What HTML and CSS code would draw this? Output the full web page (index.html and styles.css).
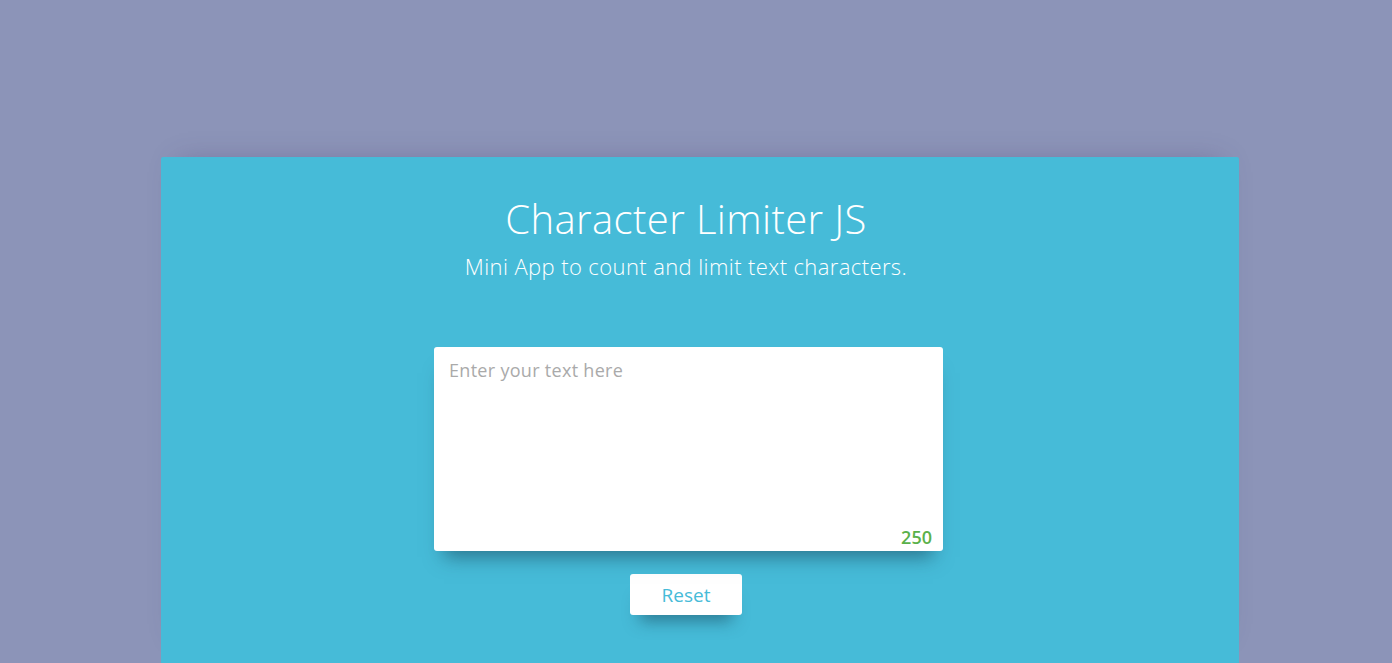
FILE: index.html
```html
<!DOCTYPE html>
<html lang="en">
<head>
<meta charset="utf-8">
<title>Character Limiter JS</title>
<link rel="stylesheet" href="styles.css">
</head>
<body>
<main class="card">
  <h1 class="title">Character Limiter JS</h1>
  <p class="subtitle">Mini App to count and limit text characters.</p>
  <div class="editor">
    <textarea class="text-input" placeholder="Enter your text here"></textarea>
    <span class="counter">250</span>
  </div>
  <button class="reset" type="button">Reset</button>
</main>
</body>
</html>
```
FILE: styles.css
```css
html, body {
  margin: 0;
  padding: 0;
  height: 100%;
  overflow: hidden;
}
body {
  background: #8c94b8;
  font-family: "Open Sans", "Lato", sans-serif;
  color: #fff;
}
.card {
  margin: 157px 0 0 161px;
  width: 1078px;
  height: 506px;
  box-sizing: border-box;
  padding: 35px 28px 0 0;
  background: #46bbd8;
  border-radius: 2px 2px 0 0;
  box-shadow: 0 -12px 26px -18px rgba(70, 60, 110, 0.4);
  display: flex;
  flex-direction: column;
  align-items: center;
}
.title {
  margin: 0;
  font-weight: 300;
  font-size: 40px;
  line-height: 54px;
  letter-spacing: 0.4px;
}
.subtitle {
  margin: 0;
  font-weight: 300;
  font-size: 22px;
  line-height: 40px;
  letter-spacing: 0.4px;
}
.editor {
  position: relative;
  margin: 61px 0 0 5px;
  width: 509px;
  height: 204px;
  background: #fff;
  border-radius: 3px;
  box-shadow: 0 16px 18px -10px rgba(20, 60, 80, 0.55);
}
.text-input {
  display: block;
  width: 100%;
  height: 100%;
  box-sizing: border-box;
  border: 0;
  outline: none;
  resize: none;
  background: transparent;
  padding: 11px 15px;
  font-family: inherit;
  font-size: 18px;
  letter-spacing: 0.3px;
  color: #555;
}
.text-input::placeholder {
  color: #aaa;
}
.counter {
  position: absolute;
  right: 11px;
  bottom: 2px;
  font-size: 18px;
  font-weight: 600;
  color: #5ab14a;
}
.reset {
  margin-top: 23px;
  width: 112px;
  height: 41px;
  border: 0;
  border-radius: 3px;
  background: #fff;
  color: #46bbd8;
  font-family: inherit;
  font-size: 19px;
  box-shadow: 0 16px 16px -10px rgba(20, 60, 80, 0.5);
  cursor: pointer;
}
```
